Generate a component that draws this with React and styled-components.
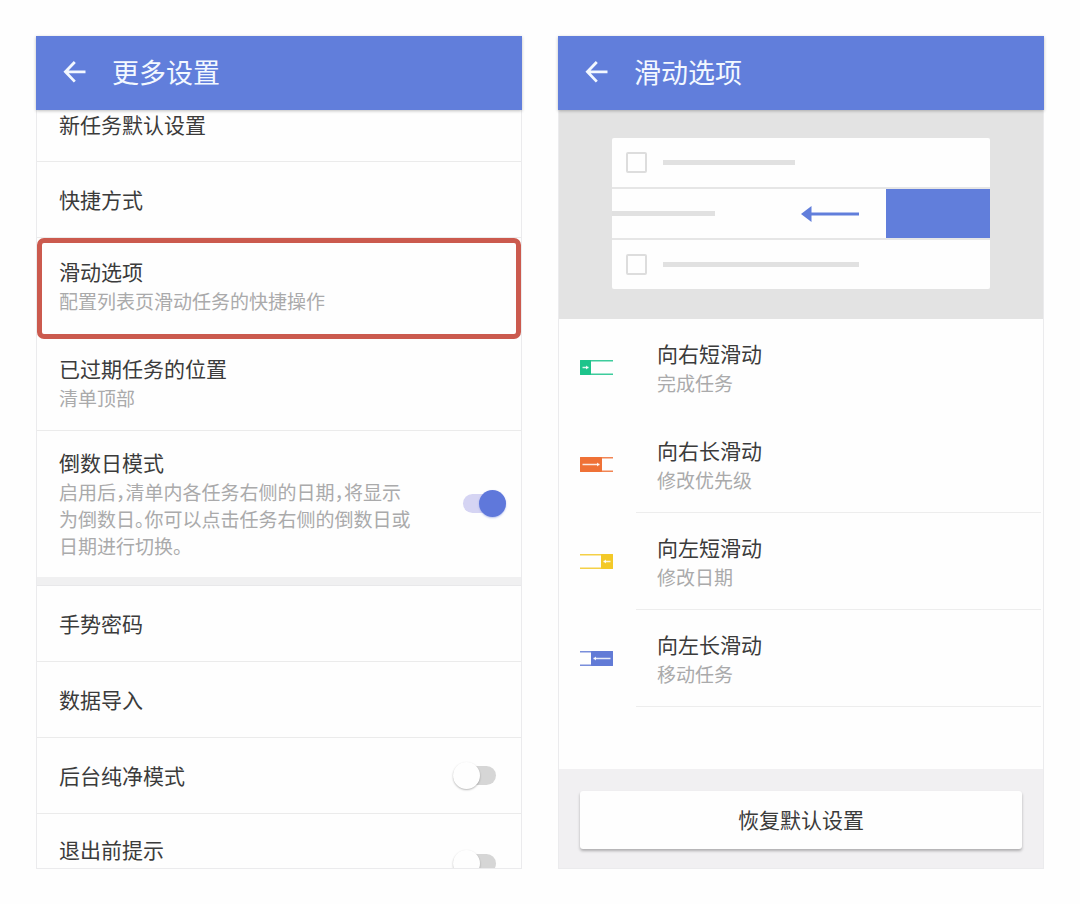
import React from "react";
import styled, { createGlobalStyle, css } from "styled-components";

const blue = "#617edb";

const GlobalStyle = createGlobalStyle`
  *, *::before, *::after { box-sizing: border-box; }
  body {
    margin: 0;
    background: #fefefe;
    color: #3b3b3b;
    font-family: "Noto Sans CJK SC", "Noto Sans", sans-serif;
  }
  button { font: inherit; color: inherit; }
`;

const Page = styled.main`
  display: grid;
  grid-template-columns: repeat(2, minmax(0, 1fr));
  gap: 36px;
  min-height: 100vh;
  padding: 36px;
`;

const Screen = styled.section`
  display: flex;
  flex-direction: column;
`;

const Header = styled.header`
  display: flex;
  align-items: center;
  gap: 26px;
  height: 74px;
  padding: 0 26px 2px;
  background: ${blue};
  color: #f3f8ff;
  box-shadow: 0 1px 3px rgba(0, 0, 0, 0.25);
  z-index: 1;
`;

const HeaderTitle = styled.h1`
  margin: 0;
  font-size: 27px;
  line-height: 36px;
  font-weight: 400;
`;

const IconButton = styled.button`
  display: flex;
  padding: 0;
  border: 0;
  background: none;
  cursor: pointer;
`;

const Body = styled.div`
  flex: 1;
  display: flex;
  flex-direction: column;
  border: 1px solid #ebebed;
  border-top: 0;
  background: #fefefe;
`;

const Row = styled.div`
  display: flex;
  align-items: center;
  justify-content: space-between;
  width: 100%;
  min-height: 76px;
  padding: 0 22px;
  border: 0;
  border-bottom: 1px solid #ebebeb;
  background: none;
  text-align: left;
  ${(p) => p.$kind === "scrolled" && css`
    min-height: 0;
    padding-bottom: 21px;
  `}
  ${(p) => p.$kind === "double" && css`
    padding-top: 15px;
    padding-bottom: 19px;
  `}
  ${(p) => p.$kind === "marked" && css`
    padding: 14px 17px 20px;
    border: 5px solid #cb5a4e;
    border-radius: 7px;
  `}
  ${(p) => p.$kind === "long" && css`
    padding: 17px 15px 18px 22px;
    border-bottom: 0;
  `}
  ${(p) => p.$kind === "toggle" && css`
    padding-right: 25px;
  `}
`;

const CutRow = styled.div`
  flex: 1 0 54px;
  height: 54px;
  overflow: hidden;
`;

const CutRowContent = styled.div`
  display: flex;
  align-items: center;
  justify-content: space-between;
  height: 99px;
  padding: 0 25px 0 22px;
`;

const TopText = styled.div`
  align-self: flex-start;
  padding-top: 21px;
`;

const Title = styled.span`
  display: block;
  padding-bottom: 1px;
  font-size: 21px;
  line-height: 29px;
`;

const Note = styled.span`
  display: block;
  max-width: 357px;
  color: #aaaaab;
  font-size: 19px;
  line-height: 27px;
  font-feature-settings: "halt";
`;

const SectionGap = styled.div`
  height: 9px;
  background: #f0f0f1;
  border-bottom: 1px solid #e8e8ea;
`;

const Switch = styled.input`
  appearance: none;
  position: relative;
  flex: none;
  display: flex;
  align-items: center;
  width: 43px;
  height: 27px;
  margin: 0;
  cursor: pointer;

  &::before {
    content: "";
    width: 43px;
    height: 19px;
    border-radius: 10px;
    background: #d6d6d6;
  }
  &::after {
    content: "";
    position: absolute;
    top: 0;
    left: 0;
    width: 27px;
    height: 27px;
    border-radius: 50%;
    background: #fefefe;
    box-shadow: 0 1px 2px rgba(0, 0, 0, 0.28);
  }
  &:checked::before { background: #d5d4f3; }
  &:checked::after {
    left: auto;
    right: 0;
    background: #5f78db;
    box-shadow: 0 1px 2px rgba(95, 120, 219, 0.45);
  }
`;

const Preview = styled.div`
  padding: 28px 53px 30px;
  background: #e3e3e3;
`;

const PreviewList = styled.div`
  display: grid;
  gap: 2px;
  background: #e6e6e6;
  border-radius: 2px;
  overflow: hidden;
`;

const PreviewRow = styled.div`
  display: flex;
  align-items: center;
  gap: 16px;
  height: 49px;
  padding-left: ${(p) => (p.$swiped ? "0" : "14px")};
  background: #fefefe;
`;

const PreviewBox = styled.span`
  width: 21px;
  height: 21px;
  border: 2px solid #dddddd;
  border-radius: 2px;
`;

const PreviewLine = styled.span`
  width: ${(p) => p.$width};
  height: 5px;
  background: #e1e1e1;
`;

const Swiped = styled.div`
  flex: 1;
  display: flex;
  align-items: center;
  justify-content: flex-end;
  align-self: stretch;
  gap: 27px;
`;

const SwipeAction = styled.span`
  width: 104px;
  align-self: stretch;
  background: ${blue};
`;

const OptionRow = styled.button`
  display: flex;
  align-items: center;
  gap: 23px;
  height: 97px;
  padding: 0 2px 0 21px;
  border: 0;
  background: none;
  text-align: left;
  cursor: pointer;
`;

const OptionText = styled.span`
  flex: 1;
  align-self: stretch;
  padding: 20px 0 0 21px;
  border-bottom: 1px solid #ededed;
  ${OptionRow}:first-of-type & { border-color: transparent; }
`;

const Footer = styled.footer`
  display: flex;
  margin-top: auto;
  padding: 22px 21px 19px;
  background: #f1f0f2;
`;

const ResetButton = styled.button`
  flex: 1;
  height: 58px;
  padding: 0 0 2px;
  border: 0;
  border-radius: 3px;
  background: #fefefe;
  box-shadow: 0 2px 3px rgba(0, 0, 0, 0.28);
  font-size: 21px;
  line-height: 29px;
  cursor: pointer;
`;

function AppHeader({ title }) {
  return (
    <Header>
      <IconButton type="button" aria-label="返回">
        <svg width="24" height="24" viewBox="0 0 24 24" fill="none" stroke="currentColor" strokeWidth="2.8">
          <path d="M12.8 2 3.4 11.8 12.8 21.6M3.4 11.8H23.5" />
        </svg>
      </IconButton>
      <HeaderTitle>{title}</HeaderTitle>
    </Header>
  );
}

function LinkRow({ title, note, kind }) {
  return (
    <Row as="button" type="button" $kind={kind}>
      <span>
        <Title>{title}</Title>
        {note && <Note>{note}</Note>}
      </span>
    </Row>
  );
}

function SwipeIcon({ color, width, toLeft }) {
  const start = toLeft ? 33 - width : 0;
  const a = start + 2.5;
  const b = start + width - 2.5;
  const tip = toLeft ? a : b;
  const back = toLeft ? tip + 2.5 : tip - 2.5;
  return (
    <svg width="33" height="15" viewBox="0 0 33 15" aria-hidden="true">
      <path d="M0 .8H33M0 14.2H33" stroke={color} strokeWidth="1.5" opacity=".85" />
      <rect x={start} width={width} height="15" rx="1" fill={color} />
      <path d={`M${a} 7.5H${b}`} stroke="#fff" strokeWidth="1.5" opacity=".85" />
      <path d={`M${tip} 7.5 ${back} 5.6V9.4Z`} fill="#fff" opacity=".85" />
    </svg>
  );
}

const options = [
  { title: "向右短滑动", note: "完成任务", color: "#1dc48b", width: 11 },
  { title: "向右长滑动", note: "修改优先级", color: "#ef7136", width: 22 },
  { title: "向左短滑动", note: "修改日期", color: "#f3c928", width: 12, toLeft: true },
  { title: "向左长滑动", note: "移动任务", color: "#627bd6", width: 22, toLeft: true },
];

export default function App() {
  return (
    <>
      <GlobalStyle />
      <Page>
        <Screen>
          <AppHeader title="更多设置" />
          <Body>
            <LinkRow title="新任务默认设置" kind="scrolled" />
            <LinkRow title="快捷方式" />
            <LinkRow title="滑动选项" note="配置列表页滑动任务的快捷操作" kind="marked" />
            <LinkRow title="已过期任务的位置" note="清单顶部" kind="double" />
            <Row $kind="long">
              <label htmlFor="countdown">
                <Title>倒数日模式</Title>
                <Note>
                  启用后，清单内各任务右侧的日期，将显示为倒数日。你可以点击任务右侧的倒数日或日期进行切换。
                </Note>
              </label>
              <Switch id="countdown" type="checkbox" defaultChecked />
            </Row>
            <SectionGap />
            <LinkRow title="手势密码" />
            <LinkRow title="数据导入" />
            <Row $kind="toggle">
              <Title as="label" htmlFor="clean">后台纯净模式</Title>
              <Switch id="clean" type="checkbox" />
            </Row>
            <CutRow>
              <CutRowContent>
                <TopText>
                  <Title as="label" htmlFor="exit">退出前提示</Title>
                </TopText>
                <Switch id="exit" type="checkbox" />
              </CutRowContent>
            </CutRow>
          </Body>
        </Screen>

        <Screen>
          <AppHeader title="滑动选项" />
          <Body>
            <Preview>
              <PreviewList>
                <PreviewRow>
                  <PreviewBox />
                  <PreviewLine $width="132px" />
                </PreviewRow>
                <PreviewRow $swiped>
                  <PreviewLine $width="103px" />
                  <Swiped>
                    <svg width="58" height="16" viewBox="0 0 58 16" aria-hidden="true">
                      <path d="M0 8 10.5 0V16Z" fill={blue} />
                      <path d="M10 8H58" stroke={blue} strokeWidth="2.8" />
                    </svg>
                    <SwipeAction />
                  </Swiped>
                </PreviewRow>
                <PreviewRow>
                  <PreviewBox />
                  <PreviewLine $width="196px" />
                </PreviewRow>
              </PreviewList>
            </Preview>
            {options.map(({ title, note, ...icon }) => (
              <OptionRow key={title} type="button">
                <SwipeIcon {...icon} />
                <OptionText>
                  <Title>{title}</Title>
                  <Note>{note}</Note>
                </OptionText>
              </OptionRow>
            ))}
            <Footer>
              <ResetButton type="button">恢复默认设置</ResetButton>
            </Footer>
          </Body>
        </Screen>
      </Page>
    </>
  );
}
